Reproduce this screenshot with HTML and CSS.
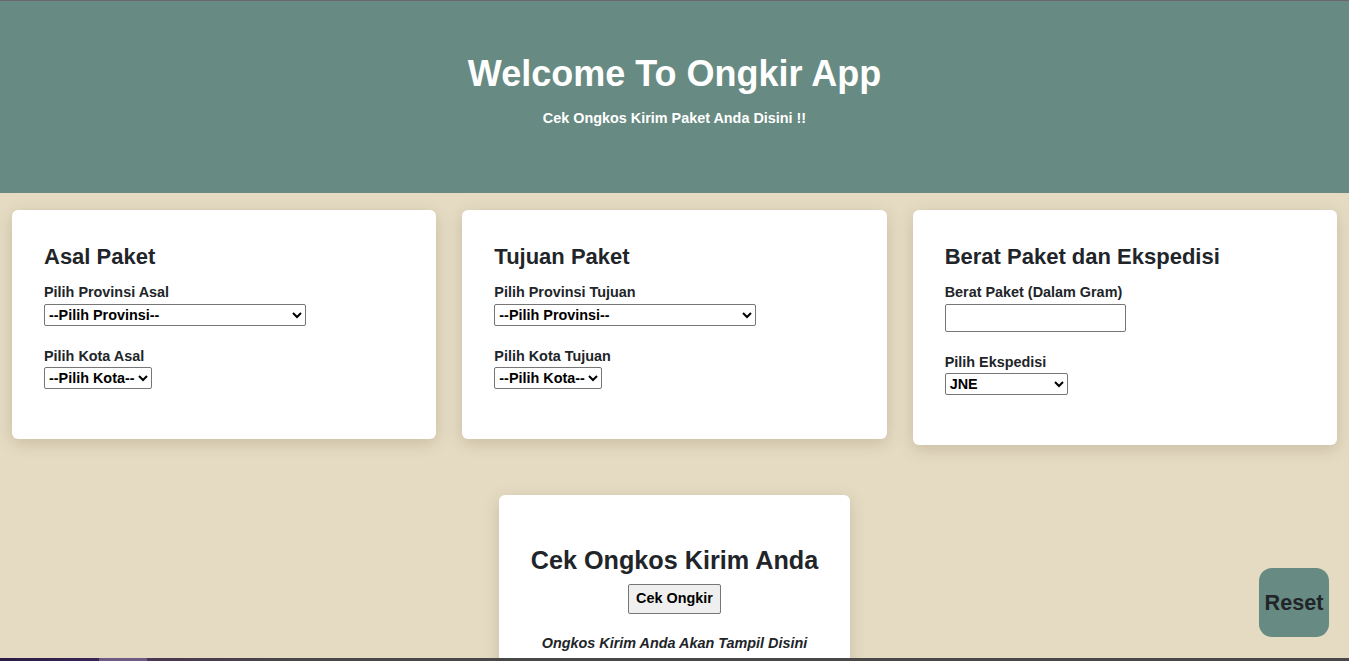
FILE: index.html
```html
<!DOCTYPE html>
<html lang="id">
<head>
<meta charset="utf-8">
<title>Ongkir App</title>
<link rel="stylesheet" href="styles.css">
</head>
<body>
<header class="hero">
  <h1 class="hero-title">Welcome To Ongkir App</h1>
  <p class="hero-sub">Cek Ongkos Kirim Paket Anda Disini !!</p>
</header>

<main class="page">
  <section class="cards">
    <div class="card">
      <h3 class="card-title">Asal Paket</h3>
      <div class="field">
        <label class="field-label">Pilih Provinsi Asal</label>
        <select class="select select-wide"><option>--Pilih Provinsi--</option></select>
      </div>
      <div class="field">
        <label class="field-label">Pilih Kota Asal</label>
        <select class="select"><option>--Pilih Kota--</option></select>
      </div>
    </div>

    <div class="card">
      <h3 class="card-title">Tujuan Paket</h3>
      <div class="field">
        <label class="field-label">Pilih Provinsi Tujuan</label>
        <select class="select select-wide"><option>--Pilih Provinsi--</option></select>
      </div>
      <div class="field">
        <label class="field-label">Pilih Kota Tujuan</label>
        <select class="select"><option>--Pilih Kota--</option></select>
      </div>
    </div>

    <div class="card">
      <h3 class="card-title">Berat Paket dan Ekspedisi</h3>
      <div class="field">
        <label class="field-label">Berat Paket (Dalam Gram)</label>
        <input class="input" type="text">
      </div>
      <div class="field">
        <label class="field-label">Pilih Ekspedisi</label>
        <select class="select select-exp"><option>JNE</option><option>POS</option><option>TIKI</option></select>
      </div>
    </div>
  </section>

  <section class="result-card">
    <h2 class="result-title">Cek Ongkos Kirim Anda</h2>
    <button class="btn-cek" type="button">Cek Ongkir</button>
    <p class="result-text">Ongkos Kirim Anda Akan Tampil Disini</p>
  </section>
</main>

<button class="btn-reset" type="button">Reset</button>
<div class="taskbar"></div>
</body>
</html>
```

FILE: styles.css
```css
html {
  scrollbar-width: none;
}
html::-webkit-scrollbar {
  display: none;
}
body {
  margin: 0;
  background: #e5dbc3;
  font-family: "Liberation Sans", Arial, sans-serif;
  font-weight: 700;
  font-size: 14.4px;
  line-height: 1.5;
  color: #212529;
}

.hero {
  background: #678a82;
  border-top: 1px solid #6d6570;
  height: 193px;
  padding-top: 51px;
  box-sizing: border-box;
  text-align: center;
  color: #fff;
}
.hero-title {
  margin: 0 0 15px;
  font-size: 36px;
  line-height: 43px;
}
.hero-sub {
  margin: 0;
  font-size: 14.4px;
  line-height: 17px;
}

.page {
  padding: 17px 12px 0;
}
.cards {
  display: grid;
  grid-template-columns: repeat(3, 1fr);
  column-gap: 26px;
  align-items: start;
}
.card {
  background: #fff;
  border-radius: 6px;
  padding: 34px 32px 31px;
  box-shadow: 0 4px 16px rgba(90, 70, 30, 0.2);
}
.card-title {
  margin: 0 0 12px;
  font-size: 22px;
  line-height: 26px;
}
.field {
  margin-bottom: 20px;
}
.field:last-child {
  margin-bottom: 19px;
}
.field-label {
  display: block;
  line-height: 21.6px;
}
.select {
  display: block;
  box-sizing: border-box;
  height: 22px;
  font: 700 14.4px "Liberation Sans", Arial, sans-serif;
  color: #000;
  background: #fff;
  border: 1px solid #767676;
  border-radius: 2px;
}
.select-wide {
  width: 262px;
}
.select-exp {
  width: 123px;
}
.input {
  display: block;
  box-sizing: border-box;
  width: 181px;
  height: 28px;
  border: 1px solid #767676;
  border-radius: 2px;
  font: 700 14.4px "Liberation Sans", Arial, sans-serif;
}

.result-card {
  width: fit-content;
  margin: 50px auto 0;
  background: #fff;
  border-radius: 6px;
  padding: 50px 32px 40px;
  text-align: center;
  box-shadow: 0 4px 16px rgba(90, 70, 30, 0.2);
}
.result-title {
  margin: 0 0 9px;
  font-size: 25.2px;
  line-height: 30px;
}
.btn-cek {
  font: 700 14.4px "Liberation Sans", Arial, sans-serif;
  line-height: 21.6px;
  color: #000;
  background: #efefef;
  border: 1px solid #767676;
  border-radius: 2px;
  padding: 3px 7px;
}
.result-text {
  margin: 19px 0 0;
  font-style: italic;
}

.btn-reset {
  position: fixed;
  right: 20px;
  bottom: 24px;
  width: 70px;
  height: 69px;
  border: none;
  border-radius: 13px;
  background: #678a82;
  color: #212529;
  font: 700 21.6px "Liberation Sans", Arial, sans-serif;
  padding: 0;
}

.taskbar {
  position: fixed;
  left: 0;
  right: 0;
  bottom: 0;
  height: 3px;
  background: linear-gradient(90deg, #2a1d44 0, #3a2557 99px, #6e5a82 99px, #6e5a82 147px, #4a3650 147px, #484848 300px, #484848 100%);
}
```
